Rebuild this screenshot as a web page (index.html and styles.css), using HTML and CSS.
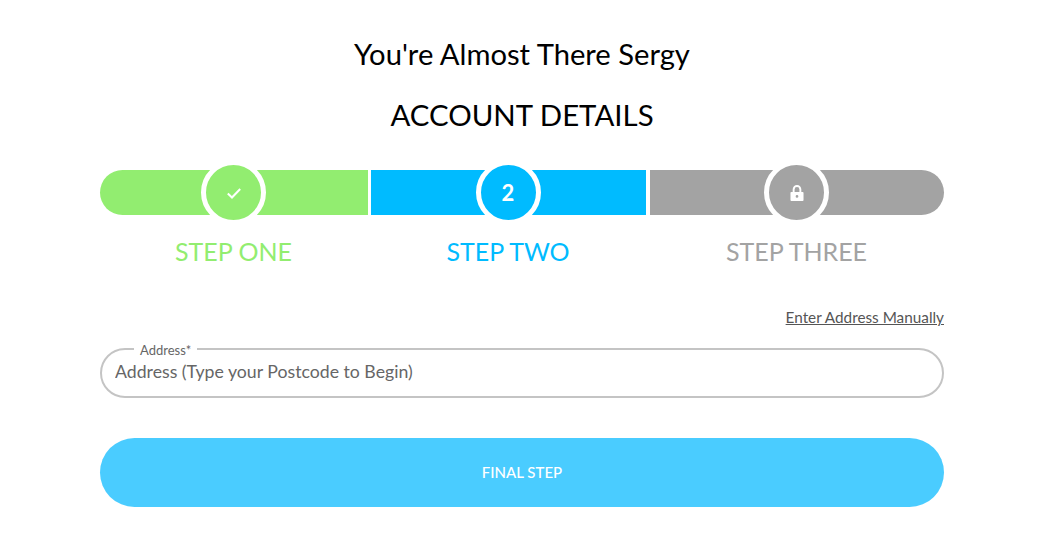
FILE: index.html
```html
<!DOCTYPE html>
<html lang="en">
    <head>
        <meta charset="UTF-8">
        <title>Account Details</title>
        <link rel="stylesheet" href="styles.css">
    </head>
    <body>
        <div class="cont">
            <h1 class="title">You're Almost There Sergy</h1>
            <h2 class="subtitle">ACCOUNT DETAILS</h2>

            <div class="steps">
                <div class="step step-one">
                    <div class="bar">
                        <span class="dot">
                            <svg class="icon" width="18" height="18" viewBox="0 0 16 16"><path d="M2.5 8.5 L6.2 12 L13.5 4.5" fill="none" stroke="#fff" stroke-width="1.8"/></svg>
                        </span>
                    </div>
                    <div class="label">STEP ONE</div>
                </div>
                <div class="step step-two">
                    <div class="bar">
                        <span class="dot">2</span>
                    </div>
                    <div class="label">STEP TWO</div>
                </div>
                <div class="step step-three">
                    <div class="bar">
                        <span class="dot">
                            <svg class="icon" width="16" height="18" viewBox="0 0 14 16"><path d="M4 7 V4.8 a3 3 0 0 1 6 0 V7" fill="none" stroke="#fff" stroke-width="1.7"/><path fill-rule="evenodd" d="M2 7 H12 a0.8 0.8 0 0 1 .8 .8 V14.2 a0.8 0.8 0 0 1 -.8 .8 H2 a0.8 0.8 0 0 1 -.8 -.8 V7.8 a0.8 0.8 0 0 1 .8 -.8 Z M7 9.8 a1.2 1.2 0 1 0 0 2.4 a1.2 1.2 0 1 0 0 -2.4 Z" fill="#fff"/></svg>
                        </span>
                    </div>
                    <div class="label">STEP THREE</div>
                </div>
            </div>

            <div class="manual"><a href="#">Enter Address Manually</a></div>

            <fieldset class="field">
                <legend>Address*</legend>
                <input type="text" placeholder="Address (Type your Postcode to Begin)">
            </fieldset>

            <button class="next" type="button">FINAL STEP</button>
        </div>
    </body>
</html>
```

FILE: styles.css
```css
html, body {
    margin: 0;
    padding: 0;
    background: #fff;
}

body {
    font-family: Lato, "Open Sans", sans-serif;
    color: #000;
}

.cont {
    width: 844px;
    height: 553px;
    margin: 0 auto;
    padding-top: 36px;
    box-sizing: border-box;
}

.title {
    margin: 0;
    font-size: 29.2px;
    font-weight: 400;
    line-height: 36px;
    text-align: center;
}

.subtitle {
    margin: 25px 0 0;
    font-size: 29.4px;
    font-weight: 400;
    line-height: 36px;
    text-align: center;
}

.steps {
    display: grid;
    grid-template-columns: 268px 275px 295px;
    column-gap: 3px;
    margin-top: 37px;
}

.step-three {
    margin-left: 1px;
}

.bar {
    height: 45px;
    padding-right: 1px;
    display: flex;
    justify-content: center;
    align-items: center;
}

.dot {
    width: 55px;
    height: 55px;
    flex: none;
    display: flex;
    justify-content: center;
    align-items: center;
    border-radius: 50%;
    border: 5px solid #fff;
    color: #fff;
    font-size: 22px;
    font-weight: 700;
}

.label {
    margin-top: 20px;
    padding-right: 1px;
    font-size: 25px;
    line-height: 32px;
    text-align: center;
}

.step-one .bar {
    background: #92ed70;
    border-radius: 23px 0 0 23px;
}

.step-one .dot {
    background: #92ed70;
}

.step-one .label {
    color: #92ed70;
}

.step-two .bar {
    background: #00bbff;
}

.step-two .dot {
    background: #00bbff;
}

.step-two .label {
    color: #00bbff;
}

.step-three .bar {
    background: #a3a3a3;
    border-radius: 0 23px 23px 0;
}

.step-three .dot {
    background: #a3a3a3;
}

.step-three .label {
    color: #a3a3a3;
}

.manual {
    margin-top: 40px;
    text-align: right;
    font-size: 15.3px;
    line-height: 20px;
}

.manual a {
    color: #555;
}

.field {
    height: 57.5px;
    margin: 13px 0 0;
    padding: 0 13px;
    box-sizing: border-box;
    border: 2px solid #c4c4c4;
    border-radius: 25px;
    min-width: 0;
}

.field legend {
    margin-left: 19px;
    padding: 4px 6px 0;
    font-size: 13px;
    line-height: 13px;
    color: #666;
}

.field input {
    display: block;
    width: 100%;
    height: 28px;
    padding: 0;
    border: 0;
    outline: 0;
    background: none;
    font-family: inherit;
    font-size: 17.7px;
}

.field input::placeholder {
    color: #666;
    opacity: 1;
}

.next {
    display: block;
    width: 100%;
    height: 69px;
    margin-top: 40px;
    border: 0;
    border-radius: 35px;
    background: #4accff;
    color: #fff;
    font-family: inherit;
    font-size: 15px;
    font-weight: 500;
}
```
